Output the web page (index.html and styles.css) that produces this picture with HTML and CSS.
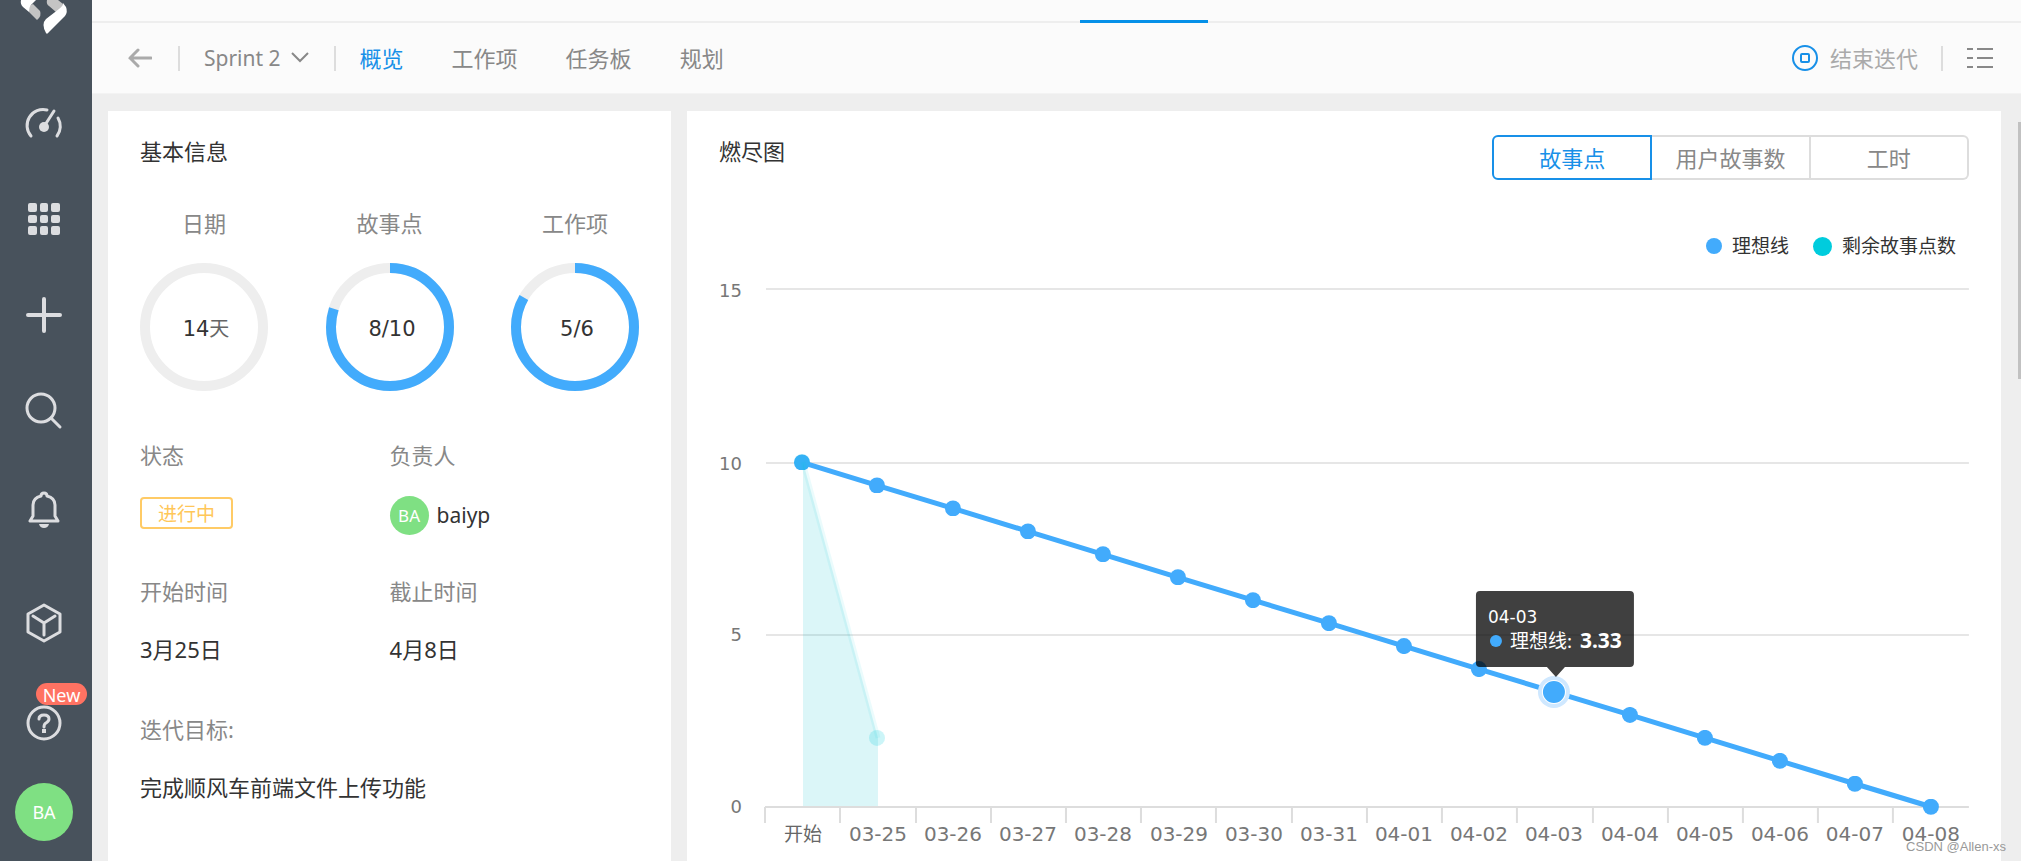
FILE: index.html
```html
<!DOCTYPE html>
<html lang="zh-CN">
<head>
<meta charset="utf-8">
<meta name="viewport" content="width=device-width, initial-scale=1">
<title>Sprint 2 概览</title>
<link rel="stylesheet" href="styles.css">
</head>
<body>
<nav class="sidebar" aria-label="主导航">
  <a class="logo" href="#" aria-label="首页">
    <svg width="48" height="36" viewBox="0 0 48 36">
      <path d="M27 0Q26 4 29 6L36 12H40L43 4 38 0Z" fill="#c4c4c4"/>
      <path d="M9 12 17 20Q22 16 20 11L13 4 9 6Z" fill="#c4c4c4"/>
      <path d="M1 0Q0 4 3 7L9 12Q9 6 12 4L16 0Z" fill="#fff"/>
      <path d="M43 3 46 7Q48 12 45 16L29 32Q27 35 26 33 21 24 26 19L39 9Q43 6 43 3Z" fill="#fff"/>
    </svg>
  </a>
  <a class="nav-item" href="#" aria-label="仪表盘">
    <svg class="icon" viewBox="0 0 36 36">
      <path d="M5 31A16 16 0 0 1 21 5M32 13A16 16 0 0 1 31 31M19 20 28 6"/>
      <circle cx="18" cy="22" r="5" class="solid"/>
    </svg>
  </a>
  <a class="nav-item" href="#" aria-label="应用">
    <svg class="icon" viewBox="0 0 36 36">
      <g class="solid">
        <rect x="2" y="2" width="9" height="9" rx="2"/><rect x="14" y="2" width="8" height="9" rx="2"/><rect x="25" y="2" width="9" height="9" rx="2"/>
        <rect x="2" y="14" width="9" height="8" rx="2"/><rect x="14" y="14" width="8" height="8" rx="2"/><rect x="25" y="14" width="9" height="8" rx="2"/>
        <rect x="2" y="25" width="9" height="9" rx="2"/><rect x="14" y="25" width="8" height="9" rx="2"/><rect x="25" y="25" width="9" height="9" rx="2"/>
      </g>
    </svg>
  </a>
  <a class="nav-item" href="#" aria-label="新建">
    <svg class="icon thick" viewBox="0 0 36 36"><path d="M18 2V34M2 18H34"/></svg>
  </a>
  <a class="nav-item" href="#" aria-label="搜索">
    <svg class="icon" viewBox="0 0 36 36"><circle cx="15" cy="15" r="14"/><path d="M25 25 34 34"/></svg>
  </a>
  <a class="nav-item" href="#" aria-label="通知">
    <svg class="icon" viewBox="0 0 36 36">
      <path d="M4 32H32L29 27V16Q29 9 21 7Q21 4 18 4Q15 4 15 7Q7 9 7 16V27Z" stroke-linejoin="round"/>
      <path d="M13 35H23Q22 39 18 39Q14 39 13 35Z" class="solid"/>
    </svg>
  </a>
  <div class="nav-bottom">
    <a class="nav-item" href="#" aria-label="产品">
      <svg class="icon tall" viewBox="0 0 36 40"><path d="M18 2 34 11V29L18 38 2 29V11ZM7 13 18 20 29 13M18 20V32" stroke-linejoin="round"/></svg>
    </a>
    <a class="nav-item help" href="#" aria-label="帮助">
      <svg class="icon" viewBox="0 0 36 36">
        <circle cx="18" cy="18" r="16"/>
        <path d="M13 14Q13 10 18 10Q23 10 23 14Q23 16 20 18Q18 19 18 22" />
        <rect x="16" y="24" width="4" height="4" class="solid"/>
      </svg>
      <span class="new">New</span>
    </a>
    <button class="avatar avatar-lg" type="button">BA</button>
  </div>
</nav>

<div class="page">
  <div class="topbar"><a class="top-tab" href="#" aria-label="迭代"></a></div>
  <header class="header">
    <a class="back" href="#" aria-label="返回">
      <svg width="24" height="20" viewBox="0 0 24 20"><path d="M23 10H2M10 2 2 10 10 18"/></svg>
    </a>
    <span class="divider"></span>
    <button class="sprint" type="button">Sprint 2
      <svg width="18" height="12" viewBox="0 0 18 12"><path d="M1 1 9 9 17 1"/></svg>
    </button>
    <span class="divider"></span>
    <nav class="tabs" aria-label="迭代视图">
      <a class="active" href="#">概览</a>
      <a href="#">工作项</a>
      <a href="#">任务板</a>
      <a href="#">规划</a>
    </nav>
    <button class="finish" type="button">
      <svg width="26" height="26" viewBox="0 0 26 26"><circle cx="13" cy="13" r="12"/><rect x="9" y="9" width="8" height="8" rx="1"/></svg>
      结束迭代
    </button>
    <span class="divider"></span>
    <button class="list" type="button" aria-label="列表">
      <svg width="26" height="22" viewBox="0 0 26 22"><path d="M0 2H6M10 2H26M0 11H6M10 11H26M0 20H6M10 20H26"/></svg>
    </button>
  </header>

  <main class="content">
    <section class="card">
      <h2>基本信息</h2>
      <div class="metrics">
        <div class="metric">
          <span class="label">日期</span>
          <svg class="ring" viewBox="0 0 128 128">
            <circle cx="64" cy="64" r="59"/>
            <text x="66" y="73">14<tspan class="unit">天</tspan></text>
          </svg>
        </div>
        <div class="metric">
          <span class="label">故事点</span>
          <svg class="ring" viewBox="0 0 128 128">
            <circle cx="64" cy="64" r="59"/>
            <circle class="arc" cx="64" cy="64" r="59" pathLength="100" stroke-dasharray="80 100" transform="rotate(-90 64 64)"/>
            <text x="66" y="73">8/10</text>
          </svg>
        </div>
        <div class="metric">
          <span class="label">工作项</span>
          <svg class="ring" viewBox="0 0 128 128">
            <circle cx="64" cy="64" r="59"/>
            <circle class="arc" cx="64" cy="64" r="59" pathLength="600" stroke-dasharray="500 600" transform="rotate(-90 64 64)"/>
            <text x="66" y="73">5/6</text>
          </svg>
        </div>
      </div>
      <dl class="details">
        <div>
          <dt>状态</dt>
          <dd class="person"><span class="status">进行中</span></dd>
        </div>
        <div>
          <dt>负责人</dt>
          <dd class="person"><span class="avatar avatar-sm">BA</span><span class="name">baiyp</span></dd>
        </div>
        <div>
          <dt>开始时间</dt>
          <dd>3月25日</dd>
        </div>
        <div>
          <dt>截止时间</dt>
          <dd>4月8日</dd>
        </div>
        <div class="goal">
          <dt>迭代目标:</dt>
          <dd>完成顺风车前端文件上传功能</dd>
        </div>
      </dl>
    </section>

    <section class="card">
      <div class="chart-head">
        <h2>燃尽图</h2>
        <div class="segments">
          <button class="selected" type="button">故事点</button>
          <button type="button">用户故事数</button>
          <button type="button">工时</button>
        </div>
      </div>
      <ul class="legend">
        <li><span class="dot ideal"></span>理想线</li>
        <li><span class="dot remaining"></span>剩余故事点数</li>
      </ul>
      <svg class="chart" viewBox="0 0 1250 591" role="img" aria-label="燃尽图">
        <defs>
          <marker id="point" markerUnits="userSpaceOnUse" markerWidth="16" markerHeight="16" refX="8" refY="8">
            <circle cx="8" cy="8" r="8" fill="#42abfc"/>
          </marker>
        </defs>
        <path class="grid" d="M47 19H1250M47 193H1250M47 365H1250"/>
        <path class="axis" d="M46 537H1250M46 537V553M121 537V553M197 537V553M272 537V553M347 537V553M422 537V553M497 537V553M573 537V553M648 537V553M723 537V553M798 537V553M874 537V553M949 537V553M1024 537V553M1099 537V553M1174 537V553"/>
        <g class="ticks-y">
          <text x="23" y="27">15</text><text x="23" y="200">10</text><text x="23" y="371">5</text><text x="23" y="543">0</text>
        </g>
        <g class="ticks-x">
          <text class="cjk" x="84" y="571">开始</text><text x="159" y="571">03-25</text><text x="234" y="571">03-26</text><text x="309" y="571">03-27</text>
          <text x="384" y="571">03-28</text><text x="460" y="571">03-29</text><text x="535" y="571">03-30</text><text x="610" y="571">03-31</text>
          <text x="685" y="571">04-01</text><text x="760" y="571">04-02</text><text x="835" y="571">04-03</text><text x="911" y="571">04-04</text>
          <text x="986" y="571">04-05</text><text x="1061" y="571">04-06</text><text x="1136" y="571">04-07</text><text x="1212" y="571">04-08</text>
        </g>
        <polyline class="ideal-line" points="83,192.5 158,215.5 234,238.4 309,261.4 384,284.3 459,307.3 534,330.2 610,353.2 685,376.1 760,399.1 835,422 911,445 986,467.9 1061,490.9 1136,513.8 1212,536.8"/>
        <path d="M84 192 159 468V536H84Z" fill="#00bfcc" fill-opacity=".14"/>
        <g opacity=".2" fill="#00ccdd">
          <circle cx="83" cy="192" r="8"/>
          <circle cx="158" cy="468" r="8"/>
        </g>
        <path d="M84 192 159 468" stroke="#00ccdd" stroke-opacity=".08" stroke-width="5"/>
        <circle cx="835" cy="422" r="16" fill="#cfe8ff"/>
        <circle cx="835" cy="422" r="12" fill="#fff"/>
        <circle cx="835" cy="422" r="11" fill="#42abfc"/>
        <g class="tip">
          <path d="M761 321H911Q915 321 915 325V393Q915 397 911 397H846L837 407 828 397H761Q757 397 757 393V325Q757 321 761 321Z" fill="#000" fill-opacity=".75"/>
          <text class="tip-date" x="769" y="353">04-03</text>
          <circle cx="777" cy="371" r="6" fill="#42abfc"/>
          <text x="791" y="378" class="tip-name">理想线:</text>
          <text x="861" y="378" class="tip-value">3.33</text>
        </g>
      </svg>
    </section>
    <span class="scroll-thumb"></span>
  </main>
</div>
<span class="watermark">CSDN @Allen-xs</span>
</body>
</html>
```

FILE: styles.css
```css
* { box-sizing: border-box; }
body {
  margin: 0;
  height: 100vh;
  overflow: hidden;
  display: flex;
  background: #eee;
  color: #333;
  font: 22px/32px "Noto Sans", "Noto Sans CJK SC", sans-serif;
}
a { color: inherit; text-decoration: none; }
button { font: inherit; color: inherit; border: 0; padding: 0; background: none; cursor: pointer; }
svg { display: block; flex: none; fill: none; }
h2 { margin: 0; font-size: 22px; font-weight: 400; }

/* Sidebar */
.sidebar {
  flex: 0 0 92px;
  padding: 0 4px 20px 0;
  display: flex;
  flex-direction: column;
  align-items: center;
  background: #48525c;
}
.logo { height: 75px; }
.nav-item { position: relative; height: 96px; display: flex; align-items: center; }
.icon { width: 36px; height: 36px; overflow: visible; stroke: #dcdde0; stroke-width: 3; stroke-linecap: round; }
.icon.tall { height: 40px; }
.icon.thick { stroke-width: 4; }
.icon .solid { fill: #dcdde0; stroke: none; }
.nav-bottom { margin-top: auto; display: flex; flex-direction: column; align-items: center; }
.nav-bottom .nav-item { height: 100px; }
.new {
  position: absolute;
  left: 10px;
  top: 10px;
  width: 51px;
  height: 22px;
  border-radius: 11px;
  background: #ff7262;
  color: #fff;
  font-size: 18px;
  line-height: 24px;
  text-align: center;
}
.avatar { flex: none; border-radius: 50%; background: #7fe083; color: #fff; text-align: center; }
.avatar-lg { width: 58px; height: 58px; margin-top: 10px; font-size: 18px; }
.avatar-sm { width: 39px; height: 39px; font-size: 17px; line-height: 40px; }

/* Top of the page */
.page { flex: 1; min-width: 0; display: flex; flex-direction: column; }
.topbar { flex: none; height: 23px; background: #fbfbfb; border-bottom: 2px solid #eee; }
.top-tab { display: block; width: 128px; height: 23px; margin-left: 51.2%; border-bottom: 3px solid #0590e8; }
.header {
  flex: none;
  height: 71px;
  padding: 0 28px 0 36px;
  display: flex;
  align-items: center;
  background: #fbfbfb;
  border-bottom: 1px solid #f3f3f3;
  color: #888;
}
.header svg { stroke: #888; stroke-width: 2; }
.back svg { stroke: #aaa; stroke-width: 3; stroke-linecap: round; }
.divider { width: 2px; height: 25px; background: #ddd; }
.back { margin-right: 26px; }
.sprint { margin: 0 25px 0 24px; display: flex; align-items: center; gap: 10px; font-size: 21px; }
.tabs { margin-left: 24px; display: flex; gap: 48px; }
.tabs .active { color: #1890e8; }
.finish { margin: 0 23px 0 auto; display: flex; align-items: center; gap: 12px; color: #aaa; }
.finish svg { stroke: #1890e8; }
.list { margin-left: 24px; }

/* Cards */
.content {
  position: relative;
  flex: 1;
  min-height: 0;
  overflow: hidden;
  padding: 17px 20px 0 16px;
  display: grid;
  grid-template-columns: 3fr 7fr;
  gap: 16px;
}
.card { min-width: 0; padding: 24px 32px 0; background: #fff; }
.metrics { margin-top: 40px; display: flex; justify-content: space-between; }
.metric { display: flex; flex-direction: column; align-items: center; gap: 24px; }
.label, dt { color: #888; }
.ring { width: 128px; height: 128px; }
.ring circle { stroke: #eee; stroke-width: 10; }
.ring .arc { stroke: #42abfc; }
.ring text { fill: #333; font: 21px "DejaVu Sans", sans-serif; text-anchor: middle; }
.ring .unit { fill: #666; font: 20px "Noto Sans CJK SC", sans-serif; }
.details { margin: 48px 0 0; display: grid; grid-template-columns: 1fr 1fr; row-gap: 40px; }
dd { margin: 26px 0 0; }
dd.person { height: 40px; margin-top: 24px; display: flex; align-items: center; gap: 8px; }
.name { font-size: 21px; }
.status {
  width: 93px;
  height: 32px;
  margin-bottom: 4px;
  border: 2px solid #ffcb66;
  border-radius: 4px;
  color: #ffc759;
  font-size: 19px;
  line-height: 30px;
  text-align: center;
}
.goal { grid-column: 1 / -1; margin-top: 8px; }

/* Burndown chart */
.chart-head { display: flex; justify-content: space-between; align-items: flex-start; }
.segments { display: flex; width: 477px; }
.segments button { flex: 1; height: 45px; border: 2px solid #ddd; border-left-width: 0; color: #888; }
.segments button:last-child { border-radius: 0 6px 6px 0; }
.segments .selected { border: 2px solid #1890e8; border-radius: 6px 0 0 6px; color: #1890e8; }
.legend {
  margin: 50px 13px 8px 0;
  padding: 0;
  display: flex;
  justify-content: flex-end;
  gap: 24px;
  list-style: none;
  font-size: 19px;
}
.legend li { display: flex; align-items: center; gap: 10px; }
.dot { width: 16px; height: 16px; border-radius: 50%; background: #42abfc; }
.dot.remaining { width: 19px; height: 19px; background: #00ccdd; }
.chart { width: 100%; height: auto; }
.grid, .axis { stroke: #e6e6e6; stroke-width: 2; }
.axis { stroke: #ddd; }
.chart text { font-family: "DejaVu Sans", "Noto Sans CJK SC", sans-serif; }
.ticks-y text { fill: #777; font-size: 18px; text-anchor: end; }
.ticks-x text { fill: #777; font-size: 20px; text-anchor: middle; }
.ticks-x .cjk { fill: #666; font-size: 19px; }
.ideal-line { stroke: #42abfc; stroke-width: 5; marker-start: url(#point); marker-mid: url(#point); marker-end: url(#point); }
.tip text { fill: #fff; }
.tip .tip-date { font-size: 17px; }
.tip .tip-name { font: 19px "Noto Sans", "Noto Sans CJK SC", sans-serif; }
.tip .tip-value { font: 700 21px "Noto Sans", sans-serif; }
.scroll-thumb { position: absolute; right: 0; top: 28px; width: 3px; height: 257px; background: #c1c1c1; }
.watermark {
  position: absolute;
  right: 15px;
  bottom: 4px;
  color: #999;
  font: 13px/20px "Liberation Sans", Arial, sans-serif;
}
```
